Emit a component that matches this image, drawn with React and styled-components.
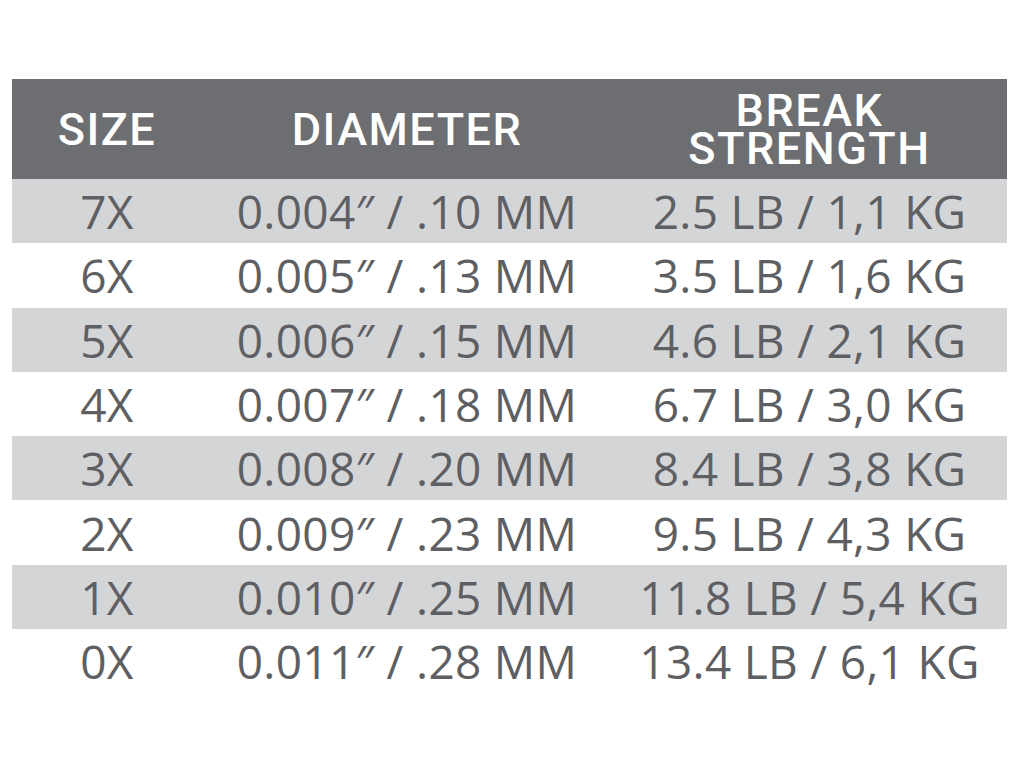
import React from "react";
import styled, { createGlobalStyle } from "styled-components";

const Global = createGlobalStyle`
  html, body { margin: 0; padding: 0; background: #ffffff; }
  body { width: 1024px; height: 768px; overflow: hidden; }
`;

const Page = styled.div`
  padding: 79px 0 0 12px;
`;

const Table = styled.div`
  width: 995px;
  display: grid;
  grid-template-columns: 190px 410px 395px;
`;

const HeadCell = styled.div`
  height: 100px;
  background: #6d6e71;
  color: #ffffff;
  display: flex;
  flex-direction: column;
  align-items: center;
  justify-content: center;
  text-align: center;
  font-family: Roboto, "Liberation Sans", sans-serif;
  font-weight: 500;
  font-size: 45px;
  line-height: 38px;
  letter-spacing: 1.5px;
  padding-top: 2px;
  box-sizing: border-box;
`;

const HeadLine = styled.span`
  display: block;
`;

const Cell = styled.div`
  height: 64.3px;
  background: ${(p) => (p.$shaded ? "#d4d5d7" : "#ffffff")};
  color: #5e5f63;
  display: flex;
  align-items: center;
  justify-content: center;
  font-family: "Open Sans", "Liberation Sans", sans-serif;
  font-weight: 400;
  font-size: 46px;
  white-space: nowrap;
  letter-spacing: 0.3px;
`;

const rows = [
  ["7X", "0.004\u2033 / .10 MM", "2.5 LB / 1,1 KG"],
  ["6X", "0.005\u2033 / .13 MM", "3.5 LB / 1,6 KG"],
  ["5X", "0.006\u2033 / .15 MM", "4.6 LB / 2,1 KG"],
  ["4X", "0.007\u2033 / .18 MM", "6.7 LB / 3,0 KG"],
  ["3X", "0.008\u2033 / .20 MM", "8.4 LB / 3,8 KG"],
  ["2X", "0.009\u2033 / .23 MM", "9.5 LB / 4,3 KG"],
  ["1X", "0.010\u2033 / .25 MM", "11.8 LB / 5,4 KG"],
  ["0X", "0.011\u2033 / .28 MM", "13.4 LB / 6,1 KG"],
];

export default function App() {
  return (
    <>
      <Global />
      <Page>
        <Table>
          <HeadCell>SIZE</HeadCell>
          <HeadCell>DIAMETER</HeadCell>
          <HeadCell>
            <HeadLine>BREAK</HeadLine>
            <HeadLine>STRENGTH</HeadLine>
          </HeadCell>
          {rows.map((r, i) =>
            r.map((c, j) => (
              <Cell key={`${i}-${j}`} $shaded={i % 2 === 0}>
                {c}
              </Cell>
            ))
          )}
        </Table>
      </Page>
    </>
  );
}
